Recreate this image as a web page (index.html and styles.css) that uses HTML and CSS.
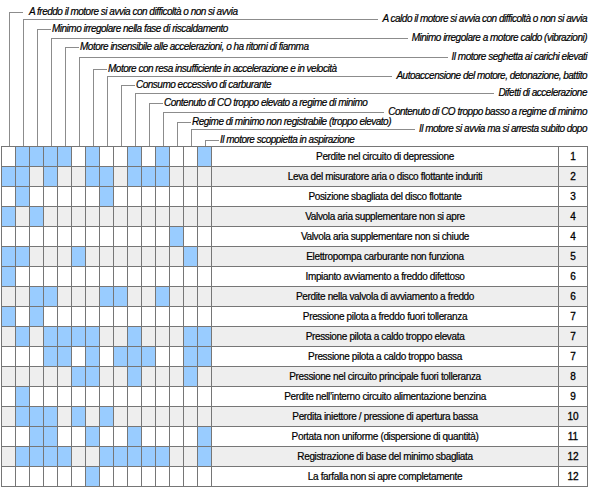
FILE: index.html
```html
<!DOCTYPE html>
<html lang="it">
<head>
<meta charset="utf-8">
<title>Tabella diagnosi</title>
<link rel="stylesheet" href="styles.css">
</head>
<body>
<div class="legend">
 <div class="ld">
  <div class="lab left first h0"><span class="ln"></span><span class="tx">A freddo il motore si avvia con difficoltà o non si avvia</span></div>
  <div class="ld">
   <div class="lab right h1"><span class="ln"></span><span class="tx">A caldo il motore si avvia con difficoltà o non si avvia</span></div>
   <div class="ld">
    <div class="lab left h2"><span class="ln"></span><span class="tx">Minimo irregolare nella fase di riscaldamento</span></div>
    <div class="ld">
     <div class="lab right h3"><span class="ln"></span><span class="tx">Minimo irregolare a motore caldo (vibrazioni)</span></div>
     <div class="ld">
      <div class="lab left h4"><span class="ln"></span><span class="tx">Motore insensibile alle accelerazioni, o ha ritorni di fiamma</span></div>
      <div class="ld">
       <div class="lab right h5"><span class="ln"></span><span class="tx">Il motore seghetta ai carichi elevati</span></div>
       <div class="ld">
        <div class="lab left h6"><span class="ln"></span><span class="tx">Motore con resa insufficiente in accelerazione e in velocità</span></div>
        <div class="ld">
         <div class="lab right h7"><span class="ln"></span><span class="tx">Autoaccensione del motore, detonazione, battito</span></div>
         <div class="ld">
          <div class="lab left h8"><span class="ln"></span><span class="tx">Consumo eccessivo di carburante</span></div>
          <div class="ld">
           <div class="lab right h9"><span class="ln"></span><span class="tx">Difetti di accelerazione</span></div>
           <div class="ld">
            <div class="lab left h10"><span class="ln"></span><span class="tx">Contenuto di CO troppo elevato a regime di minimo</span></div>
            <div class="ld">
             <div class="lab right h11"><span class="ln"></span><span class="tx">Contenuto di CO troppo basso a regime di minimo</span></div>
             <div class="ld">
              <div class="lab left h12"><span class="ln"></span><span class="tx">Regime di minimo non registrabile (troppo elevato)</span></div>
              <div class="ld">
               <div class="lab right h13"><span class="ln"></span><span class="tx">Il motore si avvia ma si arresta subito dopo</span></div>
               <div class="ld">
                <div class="lab left h14"><span class="ln"></span><span class="tx">Il motore scoppietta in aspirazione</span></div>
               </div>
              </div>
             </div>
            </div>
           </div>
          </div>
         </div>
        </div>
       </div>
      </div>
     </div>
    </div>
   </div>
  </div>
 </div>
</div>

<div class="grid">
 <div class="r"><i></i><i class="b"></i><i class="b"></i><i class="b"></i><i class="b"></i><i></i><i class="b"></i><i></i><i></i><i class="b"></i><i></i><i class="b"></i><i></i><i></i><i class="b"></i><div class="d">Perdite nel circuito di depressione</div><div class="n">1</div></div>
 <div class="r alt"><i class="b"></i><i class="b"></i><i></i><i class="b"></i><i></i><i></i><i class="b"></i><i class="b"></i><i></i><i class="b"></i><i class="b"></i><i class="b"></i><i></i><i></i><i></i><div class="d">Leva del misuratore aria o disco flottante induriti</div><div class="n">2</div></div>
 <div class="r"><i></i><i class="b"></i><i></i><i></i><i></i><i></i><i></i><i class="b"></i><i></i><i></i><i></i><i></i><i></i><i></i><i></i><div class="d">Posizione sbagliata del disco flottante</div><div class="n">3</div></div>
 <div class="r alt"><i class="b"></i><i></i><i class="b"></i><i></i><i></i><i></i><i></i><i></i><i></i><i></i><i></i><i></i><i></i><i></i><i></i><div class="d">Valvola aria supplementare non si apre</div><div class="n">4</div></div>
 <div class="r"><i></i><i></i><i></i><i></i><i></i><i></i><i></i><i></i><i></i><i></i><i></i><i></i><i class="b"></i><i></i><i></i><div class="d">Valvola aria supplementare non si chiude</div><div class="n">4</div></div>
 <div class="r alt"><i class="b"></i><i class="b"></i><i></i><i></i><i></i><i class="b"></i><i></i><i></i><i></i><i></i><i></i><i></i><i></i><i class="b"></i><i></i><div class="d">Elettropompa carburante non funziona</div><div class="n">5</div></div>
 <div class="r"><i class="b"></i><i></i><i></i><i></i><i></i><i></i><i></i><i></i><i></i><i></i><i></i><i></i><i></i><i></i><i></i><div class="d">Impianto avviamento a freddo difettoso</div><div class="n">6</div></div>
 <div class="r alt"><i></i><i></i><i class="b"></i><i class="b"></i><i></i><i></i><i></i><i class="b"></i><i class="b"></i><i></i><i></i><i class="b"></i><i></i><i></i><i></i><div class="d">Perdite nella valvola di avviamento a freddo</div><div class="n">6</div></div>
 <div class="r"><i class="b"></i><i></i><i class="b"></i><i></i><i></i><i></i><i></i><i></i><i></i><i></i><i></i><i></i><i></i><i></i><i></i><div class="d">Pressione pilota a freddo fuori tolleranza</div><div class="n">7</div></div>
 <div class="r alt"><i></i><i class="b"></i><i></i><i class="b"></i><i class="b"></i><i class="b"></i><i class="b"></i><i></i><i></i><i class="b"></i><i></i><i></i><i></i><i class="b"></i><i class="b"></i><div class="d">Pressione pilota a caldo troppo elevata</div><div class="n">7</div></div>
 <div class="r"><i></i><i></i><i></i><i class="b"></i><i class="b"></i><i></i><i class="b"></i><i></i><i class="b"></i><i class="b"></i><i class="b"></i><i></i><i></i><i class="b"></i><i class="b"></i><div class="d">Pressione pilota a caldo troppo bassa</div><div class="n">7</div></div>
 <div class="r alt"><i></i><i></i><i></i><i></i><i></i><i class="b"></i><i class="b"></i><i></i><i></i><i class="b"></i><i></i><i></i><i></i><i class="b"></i><i></i><div class="d">Pressione nel circuito principale fuori tolleranza</div><div class="n">8</div></div>
 <div class="r"><i></i><i class="b"></i><i></i><i></i><i></i><i></i><i></i><i></i><i></i><i></i><i></i><i></i><i></i><i></i><i></i><div class="d">Perdite nell’interno circuito alimentazione benzina</div><div class="n">9</div></div>
 <div class="r alt"><i></i><i class="b"></i><i class="b"></i><i class="b"></i><i></i><i class="b"></i><i></i><i class="b"></i><i></i><i></i><i></i><i></i><i></i><i></i><i></i><div class="d">Perdita iniettore / pressione di apertura bassa</div><div class="n">10</div></div>
 <div class="r"><i></i><i></i><i class="b"></i><i class="b"></i><i></i><i></i><i class="b"></i><i></i><i></i><i class="b"></i><i></i><i></i><i></i><i></i><i class="b"></i><div class="d">Portata non uniforme (dispersione di quantità)</div><div class="n">11</div></div>
 <div class="r alt"><i></i><i class="b"></i><i class="b"></i><i class="b"></i><i class="b"></i><i></i><i></i><i class="b"></i><i class="b"></i><i class="b"></i><i class="b"></i><i class="b"></i><i></i><i></i><i class="b"></i><div class="d">Registrazione di base del minimo sbagliata</div><div class="n">12</div></div>
 <div class="r"><i></i><i></i><i></i><i></i><i></i><i></i><i class="b"></i><i></i><i></i><i></i><i></i><i></i><i></i><i></i><i></i><div class="d">La farfalla non si apre completamente</div><div class="n">12</div></div>
</div>
</body>
</html>
```

FILE: styles.css
```css
html, body {
  margin: 0;
  padding: 0;
  background: #ffffff;
}

body {
  font-family: "Liberation Sans Narrow", "Liberation Sans", "DejaVu Sans Condensed", sans-serif;
  color: #000000;
  width: 601px;
}

/* ---------- legend (leader-line diagram) ---------- */
.legend {
  box-sizing: border-box;
  height: 146px;
  padding-top: 12px;
}

.ld {
  border-left: 1px solid #8c8c8c;
  padding-left: 13px;
}

.legend > .ld {
  margin-left: 9px;
  margin-right: 14px;
}

.lab {
  display: flex;
  align-items: flex-start;
  margin-left: -13px;
}

.ln {
  display: block;
  height: 0;
  border-top: 1px solid #8c8c8c;
}

.lab.left .ln {
  flex: none;
  width: 13px;
}

.lab.right .ln {
  flex: 1 1 auto;
}

.tx {
  display: block;
  font-size: 10px;
  line-height: 10px;
  font-style: italic;
  letter-spacing: -0.5px;
  white-space: nowrap;
  margin-top: -5px;
  -webkit-text-stroke: 0.2px #000000;
}

.lab.left .tx {
  margin-left: 1px;
}

.lab.left.first .tx {
  margin-left: 6px;
}

.lab.right .tx {
  margin-left: 4px;
}

.h0 { height: 7px; }
.h1 { height: 10px; }
.h2 { height: 9px; }
.h3 { height: 9px; }
.h4 { height: 10px; }
.h5 { height: 12px; }
.h6 { height: 7px; }
.h7 { height: 9px; }
.h8 { height: 8px; }
.h9 { height: 10px; }
.h10 { height: 9px; }
.h11 { height: 10px; }
.h12 { height: 7px; }
.h13 { height: 11px; }
.h14 { height: 6px; }

/* ---------- table ---------- */
.grid {
  box-sizing: border-box;
  display: grid;
  grid-template-columns: repeat(15, 13px) 346px 28px;
  grid-auto-rows: 19px;
  gap: 1px;
  padding: 1px;
  margin-left: 1px;
  width: 587px;
  background: #767676;
}

.r {
  display: contents;
}

.r > i,
.r > div {
  display: block;
  background: #ffffff;
}

.r.alt > i,
.r.alt > div {
  background: #eeeeee;
}

.grid .r > i.b {
  background: #99ccff;
}

.d,
.n {
  font-size: 10px;
  line-height: 19px;
  text-align: center;
  letter-spacing: -0.35px;
  white-space: nowrap;
  -webkit-text-stroke: 0.2px #000000;
}

.n {
  letter-spacing: 0;
  -webkit-text-stroke: 0.3px #000000;
}
```
